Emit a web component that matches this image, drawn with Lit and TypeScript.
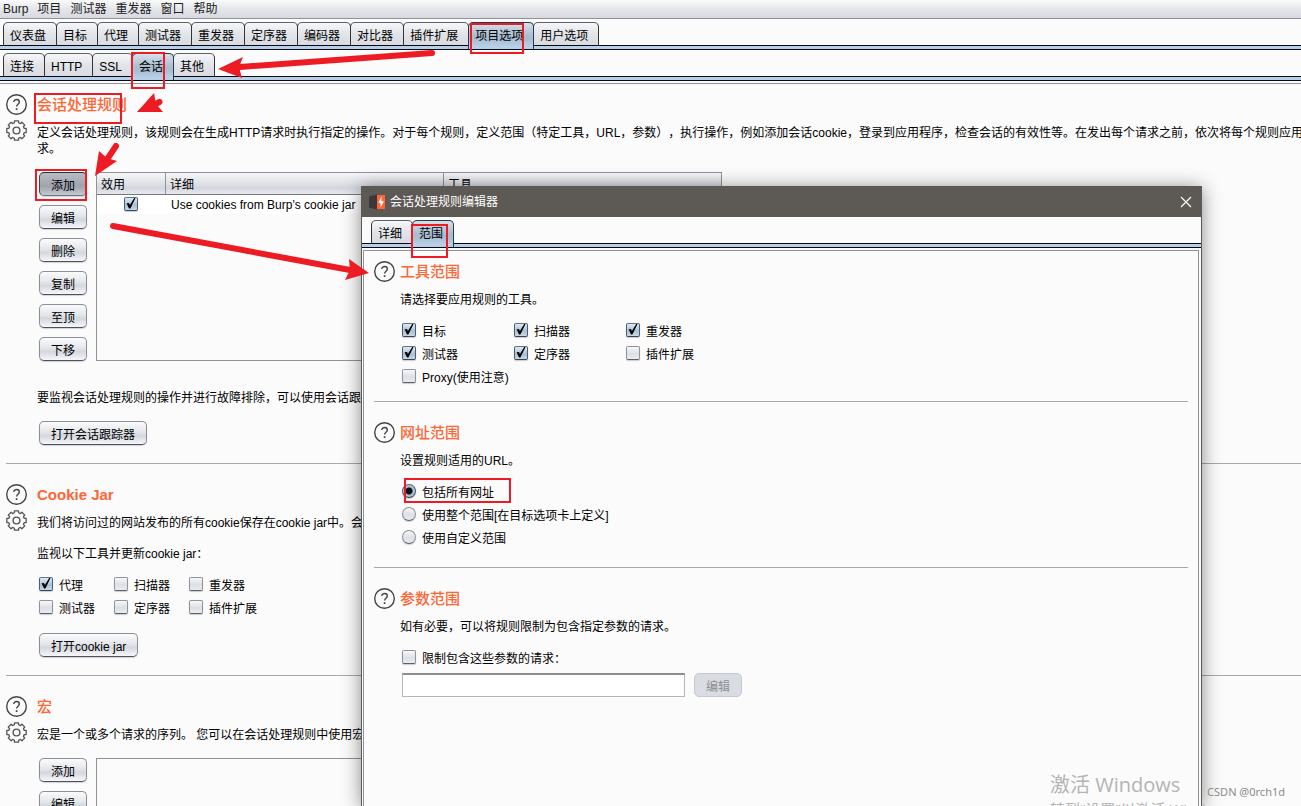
import { LitElement, html, svg, css, nothing } from "lit";
import { customElement, property } from "lit/decorators.js";

const sheet = css`
  * { box-sizing: border-box; }
  :host {
    font-family: "Liberation Sans", "Noto Sans CJK SC", sans-serif;
    font-size: 12px;
    line-height: 16px;
    color: #000;
    text-spacing-trim: space-all;
  }
  button, input { font: inherit; color: inherit; margin: 0; }
  p, h2 { margin: 0; }
  .btn {
    height: 24px;
    min-width: 48px;
    padding: 3px 11px 0;
    border: 1px solid #8b8f97;
    border-bottom-color: #4d5159;
    border-radius: 5px;
    background: linear-gradient(#fafbfc, #e4e6ea 45%, #d4d7dd 62%, #f6f7fb);
    box-shadow: 0 1px 1px #d0d2d6;
    line-height: 18px;
    white-space: nowrap;
  }
  .btn.pressed {
    border-color: #2b2f38 #6f747f #6f747f #3f444e;
    background: linear-gradient(#b9bcc3, #9ea3ae 60%, #c3c8d2);
  }
  .btn:disabled {
    color: #8e8f91;
    border-color: #c5c8ce;
    background: #d9dce2;
    box-shadow: none;
  }
  .check {
    display: inline-flex;
    align-items: center;
    gap: 6px;
    height: 23px;
    padding-top: 2px;
    white-space: nowrap;
  }
  .check input { margin-bottom: 4px; }
  input[type="checkbox"], input[type="radio"] {
    appearance: none;
    flex: none;
    width: 14px;
    height: 14px;
    border: 1px solid #8f939b;
    border-bottom-color: #5b6069;
    border-radius: 2px;
    background: linear-gradient(#f7f8fa, #dcdfe4 55%, #e9ebf0);
    box-shadow: 0 1px 1px #c9cbd0;
  }
  input[type="radio"] { border-radius: 50%; }
  input[type="checkbox"]:checked {
    border-color: #5f7488 #4b5e72 #34475a;
    background:
      url("data:image/svg+xml,%3Csvg xmlns='http://www.w3.org/2000/svg' viewBox='0 0 14 14'%3E%3Cpath d='M2.6 6.2L5 6l.9 2L10.2 1l1.3 0L6.4 11.4 5 11.4Z' fill='%23000'/%3E%3C/svg%3E") -1px -1px / 14px 14px no-repeat,
      linear-gradient(#dfe9f2, #a9bfd3 60%, #c9d9e8);
  }
  input[type="radio"]:checked {
    border-color: #51677d #41566b #2f4357;
    background: radial-gradient(circle, #0c1014 0 3px, #a5bbcf 4px, #c6d6e4);
  }
`;

const gearPath = (() => {
  const pts: string[] = [];
  const at = (r: number, deg: number) => {
    const a = (deg * Math.PI) / 180;
    return `${(10.5 + r * Math.cos(a)).toFixed(2)} ${(10.5 + r * Math.sin(a)).toFixed(2)}`;
  };
  for (let i = 0; i < 8; i++) {
    const c = i * 45;
    pts.push(at(8, c - 15), at(9.9, c - 12), at(9.9, c + 12), at(8, c + 15));
  }
  return `M${pts.join("L")}Z`;
})();

const helpIcon = svg`<svg width="21" height="21" viewBox="0 0 21 21" fill="none" stroke="#444" aria-hidden="true">
  <circle cx="10.5" cy="10.5" r="9.8" stroke-width="1.4"/>
  <path d="M7.8 8.1C7.8 6.4 9 5.5 10.6 5.5S13.3 6.5 13.3 8c0 2.2-2.7 2.2-2.7 4.6" stroke-width="1.4"/>
  <path d="M10.6 14.2v1.8" stroke-width="1.7"/></svg>`;

const gearIcon = svg`<svg width="21" height="21" viewBox="0 0 21 21" fill="none" stroke="#555" aria-hidden="true">
  <path d=${gearPath} stroke-width="1.3" stroke-linejoin="round"/>
  <circle cx="10.5" cy="10.5" r="3.4" stroke-width="1.4"/></svg>`;

const check = (label: string, checked = false) => html`
  <label class="check"><input type="checkbox" .checked=${checked} />${label}</label>`;

@customElement("tab-strip")
class TabStrip extends LitElement {
  @property({ attribute: false }) tabs: string[] = [];
  @property({ type: Number }) active = 0;
  static styles = [sheet, css`
    :host { display: block; }
    .tabs { display: flex; height: 23px; padding-left: var(--inset, 3px); }
    .tab {
      flex: none;
      height: 23px;
      margin-right: -1px;
      padding: 3px 10px 0 6px;
      border: 1px solid #5c6069;
      border-left-color: #30343b;
      border-right-color: #30343b;
      border-bottom: 0;
      border-radius: 5px 5px 0 0;
      background: linear-gradient(#f6f7f9, #e2e4e8 50%, #d9dbe1);
      line-height: 18px;
    }
    .tab.active {
      position: relative;
      height: 27px;
      padding-bottom: 4px;
      border-color: #27384a;
      background: linear-gradient(#d6e0ea, #a9bdd0 50%, #a9bfd5 65%, #b8cfe5 90%);
    }
    .line {
      height: 5px;
      border: solid #060a18;
      border-width: 1px 0;
      background: #b8cfe5;
    }
  `];
  render() {
    return html`<div class="tabs" role="tablist">
        ${this.tabs.map((t, i) => html`<button role="tab" aria-selected=${i === this.active}
          class="tab ${i === this.active ? "active" : ""}">${t}</button>`)}
      </div><div class="line"></div>`;
  }
}

@customElement("option-section")
class OptionSection extends LitElement {
  @property() heading = "";
  @property({ type: Boolean }) gear = false;
  static styles = [sheet, css`
    :host { display: flex; gap: var(--icon-gap, 10px); }
    .icons { display: flex; flex-direction: column; gap: 5px; flex: none; width: 21px; }
    .icons svg { display: block; }
    .main { flex: 1; min-width: 0; }
    .title {
      margin-bottom: 10px;
      font-size: 15px;
      line-height: 21px;
      font-weight: 700;
      color: #ff6633;
    }
    .title:lang(zh) { font-weight: 500; }
  `];
  render() {
    const latin = /^[\x00-\x7f]+$/.test(this.heading);
    return html`<div class="icons">${helpIcon}${this.gear ? gearIcon : nothing}</div>
      <div class="main"><h2 class="title" lang=${latin ? "en" : "zh"}>${this.heading}</h2><slot></slot></div>`;
  }
}

@customElement("rule-editor")
class RuleEditor extends LitElement {
  static styles = [sheet, css`
    :host {
      display: flex;
      flex-direction: column;
      background: #fbfbfb;
      border: 1px solid #5d5954;
      border-bottom: 0;
      box-shadow: 0 2px 18px rgba(0, 0, 0, 0.45);
      --icon-gap: 5px;
    }
    .bar {
      display: flex;
      align-items: center;
      gap: 5px;
      height: 30px;
      padding: 0 9px 0 7px;
      background: #5d5954;
      color: #fff;
    }
    .name { flex: 1; }
    .close { display: flex; padding: 0; border: 0; background: none; }
    .inset { padding-top: 3px; --inset: 9px; }
    .panel {
      flex: 1;
      margin: 2px 2px 0 1px;
      padding: 10px;
      border: 1px solid #8f929b;
      border-bottom: 0;
    }
    .block { padding-bottom: 18px; }
    .block.tight { padding-bottom: 13px; }
    .block + .block { border-top: 1px solid #a6a8ad; padding-top: 20px; }
    .fields { margin: 11px 0 0 2px; }
    .tools { display: grid; grid-template-columns: repeat(3, 112px); }
    .stack { display: flex; flex-direction: column; align-items: flex-start; }
    .row { display: flex; gap: 9px; margin-top: 4px; }
    .text {
      width: 283px;
      height: 24px;
      border: 1px solid #b4b6ba;
      border-top: 2px solid #8c8e93;
      background: #fff;
    }
  `];
  render() {
    return html`
      <div class="bar">
        <svg width="16" height="16" viewBox="0 0 16 16" aria-hidden="true">
          <path d="M0 2.5L8 .5v15L0 13.5Z" fill="#3a3938"/>
          <path d="M8 1h8v14H8Z" fill="#ff6633"/>
          <path d="M12.4 2.5v4.2l2.4.8-3.2 6V9.3L9.4 8.4Z" fill="#fff"/>
        </svg>
        <span class="name">会话处理规则编辑器</span>
        <button class="close" aria-label="关闭">
          <svg width="12" height="12" viewBox="0 0 12 12"><path d="M1 1l10 10M11 1L1 11" stroke="#fff" stroke-width="1.2"/></svg>
        </button>
      </div>
      <tab-strip class="inset" .tabs=${["详细", "范围"]} .active=${1}></tab-strip>
      <div class="panel">
        <div class="block tight">
          <option-section heading="工具范围">
            <p>请选择要应用规则的工具。</p>
            <div class="fields tools">
              ${check("目标", true)}${check("扫描器", true)}${check("重发器", true)}
              ${check("测试器", true)}${check("定序器", true)}${check("插件扩展")}
              ${check("Proxy(使用注意)")}
            </div>
          </option-section>
        </div>
        <div class="block">
          <option-section heading="网址范围">
            <p>设置规则适用的URL。</p>
            <div class="fields stack">
              ${["包括所有网址", "使用整个范围[在目标选项卡上定义]", "使用自定义范围"].map((t, i) => html`
                <label class="check"><input type="radio" name="scope" .checked=${i === 0} />${t}</label>`)}
            </div>
          </option-section>
        </div>
        <div class="block">
          <option-section heading="参数范围">
            <p>如有必要，可以将规则限制为包含指定参数的请求。</p>
            <div class="fields">
              ${check("限制包含这些参数的请求：")}
              <div class="row">
                <input class="text" type="text" aria-label="参数" />
                <button class="btn" disabled>编辑</button>
              </div>
            </div>
          </option-section>
        </div>
      </div>`;
  }
}

@customElement("app-root")
class AppRoot extends LitElement {
  static styles = [sheet, css`
    :host {
      display: block;
      position: relative;
      height: 100vh;
      overflow: hidden;
      background: #fbfbfb;
    }
    .menu {
      display: flex;
      gap: 9px;
      height: 19px;
      padding: 0 3px;
      border-bottom: 1px solid #8f929b;
      background: linear-gradient(#fbfbfc, #e4e6ea 50%, #d6d9df);
    }
    .menu button { padding: 0; border: 0; background: none; height: 18px; line-height: 18px; color: #222; }
    .main-tabs { padding-top: 3px; }
    .content {
      margin-top: 2px;
      border-top: 1px solid #8f929b;
      padding: 10px 0 0 6px;
    }
    .block { padding-bottom: 18px; }
    .block + .block { border-top: 1px solid #a6a8ad; padding-top: 20px; }
    .intro { white-space: nowrap; }
    .rules { display: flex; gap: 9px; margin: 15px 0 0 2px; }
    .actions { display: flex; flex-direction: column; gap: 9px; }
    .box { width: 626px; border: 1px solid #8f929b; }
    .table { width: 100%; border-collapse: separate; border-spacing: 0; table-layout: fixed; }
    .table th {
      height: 22px;
      padding: 2px 4px 0;
      border-right: 1px solid #8f929b;
      border-bottom: 1px solid #73777f;
      background: linear-gradient(#f6f7f9, #dfe1e6 50%, #d3d6dc 70%, #e6e8ee);
      font-weight: 400;
      text-align: left;
    }
    .table th:last-child { border-right: 0; }
    .table td { height: 19px; padding: 0 5px; background: #fff; }
    .table td:first-child { text-align: center; padding: 0 6px 2px 5px; }
    .table input { display: block; margin: 0 auto; }
    .c1 { width: 69px; }
    .c2 { width: 278px; }
    .trace { margin-top: 29px; }
    .open { margin: 15px 0 0 2px; }
    .watch { margin-top: 15px; }
    .sources { display: grid; grid-template-columns: repeat(3, 75px); margin: 11px 0 14px 2px; }
    .jar { margin-left: 2px; }
    .dialog { position: absolute; left: 361px; right: 99px; top: 186px; bottom: 0; }
    .notes { position: absolute; left: 0; top: 0; pointer-events: none; }
    .activate {
      position: absolute;
      right: 90px;
      top: 772px;
      width: 161px;
      color: #b4b4b4;
      font-family: "Open Sans", "Noto Sans CJK SC", sans-serif;
      white-space: nowrap;
      overflow: hidden;
    }
    .big { font-size: 20px; line-height: 26px; }
    .small { font-size: 15px; line-height: 22px; }
    .credit {
      position: absolute;
      right: 16px;
      top: 784px;
      color: #8c8c8c;
      font-family: "Noto Sans", sans-serif;
      font-size: 11px;
    }
  `];

  render() {
    return html`
      <nav class="menu">
        ${["Burp", "项目", "测试器", "重发器", "窗口", "帮助"].map((m) => html`<button>${m}</button>`)}
      </nav>
      <tab-strip class="main-tabs" .active=${9} .tabs=${["仪表盘", "目标", "代理", "测试器", "重发器", "定序器",
        "编码器", "对比器", "插件扩展", "项目选项", "用户选项"]}></tab-strip>
      <tab-strip class="main-tabs" .active=${3} .tabs=${["连接", "HTTP", "SSL", "会话", "其他"]}></tab-strip>

      <main class="content">
        <div class="block">
          <option-section heading="会话处理规则" gear>
            <p class="intro">定义会话处理规则，该规则会在生成HTTP请求时执行指定的操作。对于每个规则，定义范围（特定工具，URL，参数），执行操作，例如添加会话cookie，登录到应用程序，检查会话的有效性等。在发出每个请求之前，依次将每个规则应用<br />求。</p>
            <div class="rules">
              <div class="actions">
                ${["添加", "编辑", "删除", "复制", "至顶", "下移"].map((t, i) => html`
                  <button class="btn ${i === 0 ? "pressed" : ""}">${t}</button>`)}
              </div>
              <div class="box">
                <table class="table">
                  <thead><tr><th class="c1">效用</th><th class="c2">详细</th><th>工具</th></tr></thead>
                  <tbody><tr>
                    <td><input type="checkbox" aria-label="效用" .checked=${true} /></td>
                    <td>Use cookies from Burp's cookie jar</td><td></td>
                  </tr></tbody>
                </table>
              </div>
            </div>
            <p class="trace">要监视会话处理规则的操作并进行故障排除，可以使用会话跟踪器。</p>
            <button class="btn open">打开会话跟踪器</button>
          </option-section>
        </div>
        <div class="block">
          <option-section heading="Cookie Jar" gear>
            <p class="intro">我们将访问过的网站发布的所有cookie保存在cookie jar中。会</p>
            <p class="watch">监视以下工具并更新cookie jar：</p>
            <div class="sources">
              ${check("代理", true)}${check("扫描器")}${check("重发器")}
              ${check("测试器")}${check("定序器")}${check("插件扩展")}
            </div>
            <button class="btn jar">打开cookie jar</button>
          </option-section>
        </div>
        <div class="block">
          <option-section heading="宏" gear>
            <p class="intro">宏是一个或多个请求的序列。 您可以在会话处理规则中使用宏</p>
            <div class="rules">
              <div class="actions">
                <button class="btn">添加</button>
                <button class="btn">编辑</button>
              </div>
              <div class="box"></div>
            </div>
          </option-section>
        </div>
      </main>

      <rule-editor class="dialog" role="dialog" aria-label="会话处理规则编辑器"></rule-editor>

      <div class="activate">
        <div class="big">激活 Windows</div>
        <div class="small">转到“设置”以激活 Windows。</div>
      </div>
      <div class="credit">CSDN @0rch1d</div>

      <svg class="notes" width="600" height="520" viewBox="0 0 600 520" aria-hidden="true">
        <g fill="none" stroke="#ed1c24" stroke-width="2">
          <rect x="471" y="24" width="52" height="29"/>
          <rect x="132" y="53" width="32" height="35"/>
          <rect x="35" y="94" width="86" height="29"/>
          <rect x="36" y="170" width="50" height="30"/>
          <rect x="412" y="225" width="35" height="32"/>
          <rect x="405" y="479" width="105" height="23"/>
        </g>
        <g stroke="#ed1c24" stroke-width="6" stroke-linecap="round">
          <path d="M432 53L240 67M159.5 102L152 106M116 146L106 161M113 226L350 270"/>
        </g>
        <g fill="#ed1c24">
          <path d="M218 69L243 57L239 67L242 78Z"/>
          <path d="M137 112L154 93L156 104L163 112Z"/>
          <path d="M95 176L99 151L107 158L117 161Z"/>
          <path d="M369 273L349 259L350 270L345 280Z"/>
        </g>
      </svg>`;
  }
}
